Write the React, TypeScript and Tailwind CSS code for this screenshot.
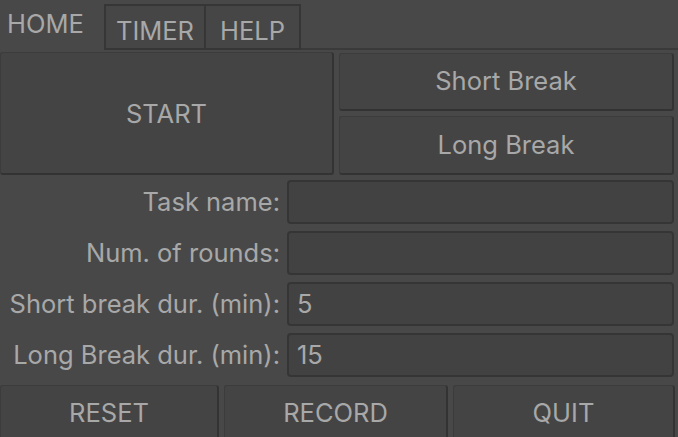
// App.tsx
import React from 'react';

const btn = "bg-[#444444] border border-[#3c3c3c] border-b-2 border-r-2 border-b-[#333333] border-r-[#333333] rounded-[3px] flex items-center justify-center";

const Field = ({ label, value }: { label: string; value?: string }) => (
  <div className="flex items-center h-[44px]">
    <div className="w-[281px] text-right pr-[1px] whitespace-nowrap">{label}</div>
    <div className="ml-[6px] w-[387px] h-full bg-[#424242] border-2 border-[#353535] rounded-[4px] flex items-center pl-[8px]">
      {value}
    </div>
  </div>
);

export default function App() {
  return (
    <div className="w-[678px] h-[437px] overflow-hidden bg-[#484848] text-[#a8a8a8] text-[25.5px] font-['Inter',sans-serif] flex flex-col">
      {/* tabs */}
      <div className="h-[50px] flex shrink-0">
        <div className="w-[104px] h-full pl-[7px] pt-[5px]">HOME</div>
        <div className="mt-[4px] w-[102px] border-2 border-[#363636] bg-[#464646] flex justify-center pt-[6px]">TIMER</div>
        <div className="mt-[4px] w-[95px] border-2 border-l-0 border-[#363636] bg-[#464646] flex justify-center pt-[6px]">HELP</div>
        <div className="flex-1 border-b-2 border-[#3a3a3a]" />
      </div>

      {/* start + breaks */}
      <div className="flex gap-[5px] pt-[2px] pr-[4px]">
        <div className={`${btn} w-[334px] h-[123px] pt-[2px]`}>START</div>
        <div className="flex-1 flex flex-col gap-[5px] pt-[1px]">
          <div className={`${btn} h-[58px]`}>Short Break</div>
          <div className={`${btn} h-[59px]`}>Long Break</div>
        </div>
      </div>

      {/* form */}
      <div className="flex flex-col gap-[7px] pt-[5px] pr-[4px]">
        <Field label="Task name:" />
        <Field label="Num. of rounds:" />
        <Field label="Short break dur. (min):" value="5" />
        <Field label="Long Break dur. (min):" value="15" />
      </div>

      {/* bottom */}
      <div className="flex gap-[5px] pt-[8px] pr-[3px]">
        <div className={`${btn} w-[219px] h-[70px] pb-[12px]`}>RESET</div>
        <div className={`${btn} w-[224px] h-[70px] pb-[12px]`}>RECORD</div>
        <div className={`${btn} flex-1 h-[70px] pb-[12px]`}>QUIT</div>
      </div>
    </div>
  );
}
